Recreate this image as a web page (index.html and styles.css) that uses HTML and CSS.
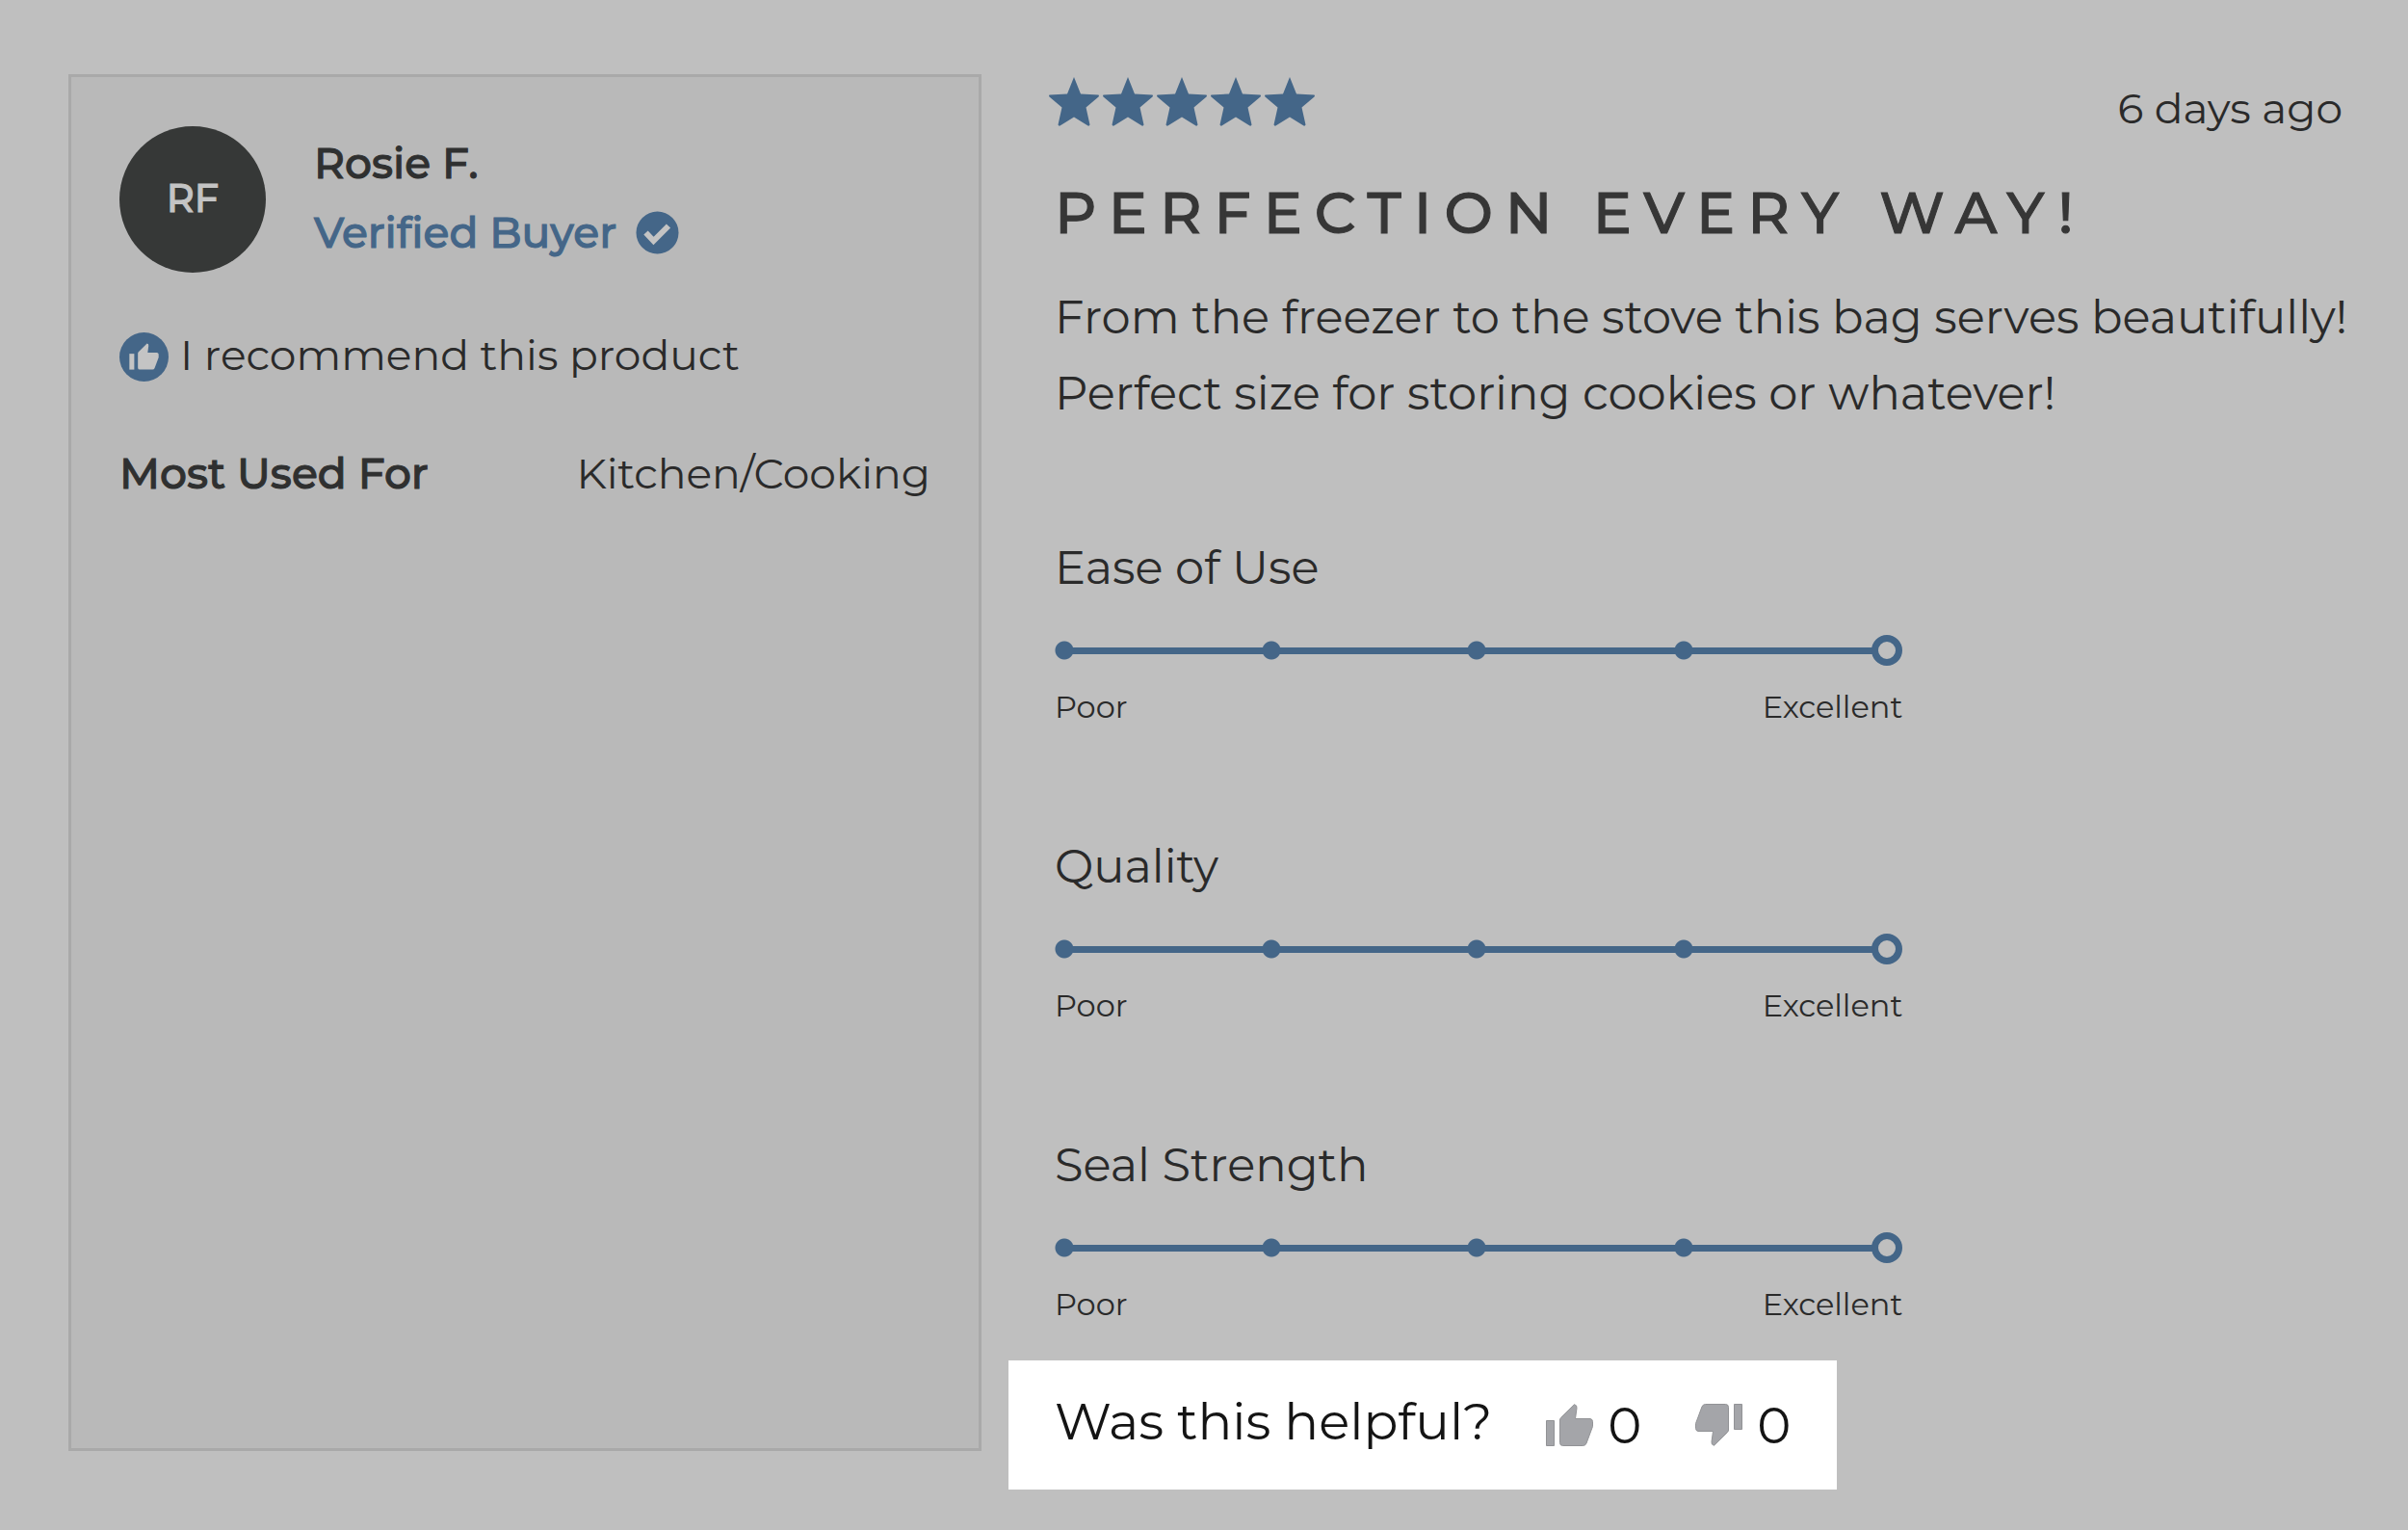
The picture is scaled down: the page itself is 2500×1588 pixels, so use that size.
FILE: index.html
```html
<!DOCTYPE html>
<html lang="en">
<head>
    <meta charset="UTF-8">
    <meta name="viewport" content="width=device-width, initial-scale=1.0">
    <title>Product Review</title>
    <link rel="stylesheet" href="styles.css">
</head>
<body>
    <svg class="sprite" aria-hidden="true">
        <symbol id="star" viewBox="0 0 54 52">
            <path d="M27 1 L34 18.500 L52.500 19.500 Q53.500 20.500 52.500 21.500 L39.500 32.500 L43.500 50.500 Q43 52 41.500 51.500 L27 42.500 L12.500 51.500 Q11 52 10.500 50.500 L14.500 32.500 L1.500 21.500 Q.5 20.500 1.500 19.500 L20 18.500 Z"/>
        </symbol>
        <symbol id="thumb" viewBox="0 0 49 44">
            <path d="M.5 17.500h8v26h-8z"/>
            <path d="M14.500 17 Q14.500 15.500 15.500 14.500 L29.500 .7 Q32.500 1.500 32 4.500 L30.500 15.500 H46 Q48.500 16 48.500 18.500 V23.500 L42 41 Q41 43.500 38.500 43.500 H17.500 Q14.500 43.500 14.500 40.500 Z"/>
        </symbol>
    </svg>

    <main class="review">
        <aside class="reviewer">
            <div class="profile">
                <div class="avatar">RF</div>
                <div class="who">
                    <div class="name">Rosie F.</div>
                    <div class="verified">
                        <span>Verified Buyer</span>
                        <svg class="check" viewBox="0 0 45 45" aria-hidden="true">
                            <circle cx="22.500" cy="22.500" r="22"/>
                            <path d="M10.500 22.500 L18.500 31 L34 15.500"/>
                        </svg>
                    </div>
                </div>
            </div>
            <div class="recommend">
                <span class="badge"><svg viewBox="0 0 49 44" aria-hidden="true"><use href="#thumb"/></svg></span>
                <span class="recommend-text">I recommend this product</span>
            </div>
            <dl class="usage">
                <dt>Most Used For</dt>
                <dd>Kitchen/Cooking</dd>
            </dl>
        </aside>

        <article class="content">
            <div class="top">
                <div class="stars" role="img" aria-label="5 out of 5 stars">
                    <svg><use href="#star"/></svg>
                    <svg><use href="#star"/></svg>
                    <svg><use href="#star"/></svg>
                    <svg><use href="#star"/></svg>
                    <svg><use href="#star"/></svg>
                </div>
                <time class="date">6 days ago</time>
            </div>
            <h1>Perfection every way!</h1>
            <p class="text">From the freezer to the stove this bag serves beautifully!<br>Perfect size for storing cookies or whatever!</p>

            <div class="scale">
                <label for="ease">Ease of Use</label>
                <input type="range" id="ease" min="1" max="5" value="5">
                <div class="ends"><span>Poor</span><span>Excellent</span></div>
            </div>
            <div class="scale">
                <label for="quality">Quality</label>
                <input type="range" id="quality" min="1" max="5" value="5">
                <div class="ends"><span>Poor</span><span>Excellent</span></div>
            </div>
            <div class="scale">
                <label for="seal">Seal Strength</label>
                <input type="range" id="seal" min="1" max="5" value="5">
                <div class="ends"><span>Poor</span><span>Excellent</span></div>
            </div>

            <div class="helpful">
                <span class="question">Was this helpful?</span>
                <div class="votes">
                    <button type="button" aria-label="Helpful"><svg viewBox="0 0 49 44"><use href="#thumb"/></svg><span>0</span></button>
                    <button type="button" aria-label="Not helpful"><svg class="down" viewBox="0 0 49 44"><use href="#thumb"/></svg><span>0</span></button>
                </div>
            </div>
        </article>
    </main>
</body>
</html>
```
FILE: styles.css
```css
* {
    box-sizing: border-box;
}
body {
    margin: 0;
    background-color: #bfbfbf;
    color: #2a2a2a;
    font-family: Montserrat, Inter, sans-serif;
    font-size: 44px;
}
.sprite {
    display: none;
}
.review {
    display: grid;
    grid-template-columns: minmax(0, 948fr) minmax(0, 1337fr);
    gap: 76px;
    padding: 77px 68px 0 71px;
    white-space: nowrap;
}
.reviewer {
    margin-bottom: 40px;
    padding: 51px 50px;
    border: 3px solid #a9a9a9;
    background-color: #b9b9b9;
}
.profile {
    display: flex;
    gap: 50px;
}
.avatar {
    width: 152px;
    height: 152px;
    border-radius: 50%;
    background-color: #363837;
    color: #c4c4c4;
    font-size: 40px;
    font-weight: 500;
    line-height: 150px;
    text-align: center;
    -webkit-text-stroke: 1px;
}
.who {
    padding-top: 2px;
    line-height: 72px;
    font-weight: 500;
    -webkit-text-stroke: 1px;
}
.name {
    color: #2f3030;
}
.verified {
    display: flex;
    align-items: center;
    gap: 20px;
    color: #446688;
}
.check {
    width: 45px;
    height: 45px;
}
.check circle {
    fill: #446688;
}
.check path {
    fill: none;
    stroke: #c4c4c4;
    stroke-width: 6;
}
.recommend {
    display: flex;
    align-items: center;
    gap: 12px;
    margin-top: 53px;
    line-height: 64px;
}
.recommend-text {
    padding-bottom: 4px;
}
.badge {
    display: flex;
    align-items: center;
    justify-content: center;
    width: 51px;
    height: 51px;
    border-radius: 50%;
    background-color: #446688;
    fill: #c4c4c4;
}
.badge svg {
    width: 31px;
    height: 28px;
}
.usage {
    display: flex;
    justify-content: space-between;
    margin: 52px 0 0;
    line-height: 70px;
}
.usage dt {
    color: #2f3030;
    font-weight: 500;
    -webkit-text-stroke: 1px;
}
.usage dd {
    margin: 0;
}
.top {
    display: flex;
    justify-content: space-between;
    height: 72px;
}
.stars {
    display: flex;
    gap: 2px;
    margin: 2px 0 0 -7px;
}
.stars svg {
    width: 54px;
    height: 52px;
    fill: #446688;
}
.date {
    line-height: 70px;
}
h1 {
    margin: 32px 0 0;
    color: #363636;
    font-size: 60px;
    font-weight: 500;
    line-height: 80px;
    letter-spacing: 13px;
    text-transform: uppercase;
    -webkit-text-stroke: 1px;
}
.text {
    margin: 29px 0 0;
    font-size: 48px;
    line-height: 79px;
}
.scale {
    width: 66%;
    margin-top: 110px;
    padding-right: 2px;
}
.text + .scale {
    margin-top: 106px;
}
.scale label {
    display: block;
    font-size: 48px;
    line-height: 70px;
}
.scale input {
    display: block;
    width: 100%;
    height: 32px;
    margin: 35px 0 0;
    appearance: none;
    background-color: transparent;
    background-image:
        radial-gradient(circle, #446688 9px, transparent 10px),
        radial-gradient(circle, #446688 9px, transparent 10px),
        radial-gradient(circle, #446688 9px, transparent 10px),
        radial-gradient(circle, #446688 9px, transparent 10px),
        linear-gradient(#446688, #446688);
    background-position: 0 50%, 25% 50%, 49.7% 50%, 74.7% 50%, 10px 50%;
    background-size: 20px 20px, 20px 20px, 20px 20px, 20px 20px, calc(100% - 30px) 7px;
    background-repeat: no-repeat;
}
.scale input::-webkit-slider-thumb {
    appearance: none;
    width: 32px;
    height: 32px;
    border: 7px solid #446688;
    border-radius: 50%;
    background-color: #bfbfbf;
}
.ends {
    display: flex;
    justify-content: space-between;
    margin-top: 23px;
    font-size: 32px;
    line-height: 40px;
}
.helpful {
    display: flex;
    align-items: center;
    gap: 56px;
    width: fit-content;
    height: 134px;
    margin: 38px 0 0 -48px;
    padding: 0 48px;
    background-color: #ffffff;
    color: #141414;
    font-size: 53px;
}
.question {
    padding-bottom: 8px;
}
.votes {
    display: flex;
    gap: 56px;
}
.helpful button {
    display: flex;
    align-items: center;
    gap: 15px;
    padding: 0;
    border: none;
    background: none;
    color: inherit;
    font: inherit;
    cursor: pointer;
}
.helpful svg {
    width: 49px;
    height: 44px;
    fill: #a4a5a9;
    stroke: #929396;
    stroke-width: 1;
}
.helpful .down {
    transform: rotate(180deg);
}
```
